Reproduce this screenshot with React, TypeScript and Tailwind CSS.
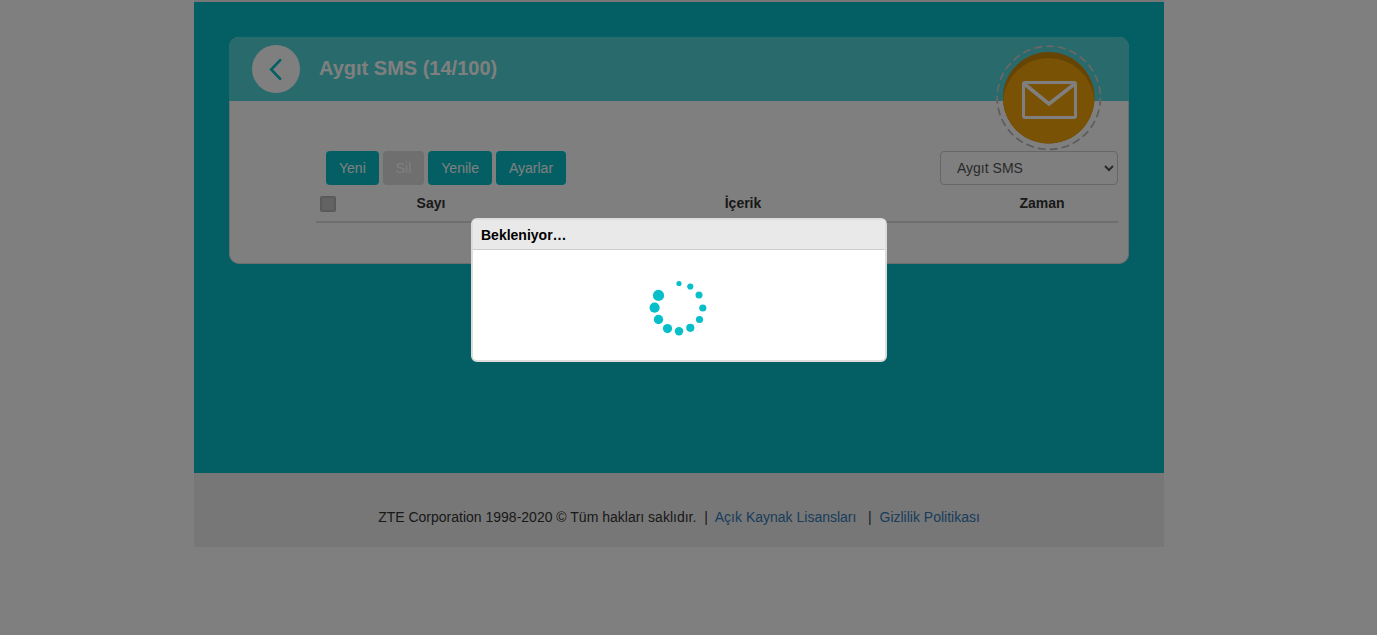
const dots = [
  { x: 39, y: 13.5, r: 2.6 },
  { x: 50.3, y: 16.5, r: 3.1 },
  { x: 59, y: 25, r: 3.5 },
  { x: 62.8, y: 38, r: 3.6 },
  { x: 59.5, y: 49.5, r: 3.6 },
  { x: 50.3, y: 57.8, r: 4.1 },
  { x: 39, y: 61.2, r: 4.2 },
  { x: 27.5, y: 58.6, r: 4.6 },
  { x: 18.5, y: 49.5, r: 4.7 },
  { x: 14.6, y: 37.7, r: 5.1 },
  { x: 18.5, y: 25.4, r: 5.6 },
];

const actions = [
  { label: "Yeni", disabled: false },
  { label: "Sil", disabled: true },
  { label: "Yenile", disabled: false },
  { label: "Ayarlar", disabled: false },
];

function MailBadge() {
  return (
    <svg className="absolute right-[25px] top-[7px] h-[108px] w-[108px]" viewBox="0 0 108 108" aria-hidden="true">
      <defs>
        <linearGradient id="ring" x1="0" y1="0" x2="0" y2="1">
          <stop offset="0.53" stopColor="#dccccc" />
          <stop offset="0.53" stopColor="#b8b4b4" />
        </linearGradient>
      </defs>
      <circle cx="53.8" cy="53.8" r="51.6" fill="none" stroke="url(#ring)" strokeWidth="1.6" strokeDasharray="8 4" />
      <circle cx="53.7" cy="53.8" r="45.8" fill="#cc8a08" />
      <path d="M8 56.8A45.8 45.8 0 0 1 99.4 56.8A45.8 45.8 0 0 1 8 56.8Z" fill="#f4a40a" />
      <rect x="28.5" y="38.5" width="52" height="35" rx="1.5" fill="none" stroke="#fff" strokeWidth="3" />
      <path d="M29.500 40L54 60L79.500 40" fill="none" stroke="#fff" strokeWidth="3.6" />
    </svg>
  );
}

function Spinner() {
  return (
    <svg className="h-[76px] w-[78px]" viewBox="0 0 78 76" aria-hidden="true">
      {dots.map((d) => (
        <circle key={d.x + "-" + d.y} cx={d.x} cy={d.y} r={d.r} fill="#08bec8" />
      ))}
    </svg>
  );
}

export default function App() {
  return (
    <div className="min-h-screen bg-white pr-[19px] font-['Liberation_Sans',Arial,sans-serif] text-sm text-[#333]">
      <div className="mx-auto max-w-[970px] bg-[#eee] pt-[2px]">
        <main className="min-h-[471px] bg-[#08bec8] px-[35px] pt-[35px]">
          <section className="relative rounded-[10px] border border-[#ddd] border-t-0 bg-white">
            <header className="-mx-px flex h-16 items-center gap-[19px] rounded-t-[10px] bg-[#52d6d8] pl-[23px]">
              <button type="button" aria-label="Geri" className="flex size-12 items-center justify-center rounded-full bg-white">
                <svg className="size-12" viewBox="0 0 48 48" fill="none" stroke="#08bec8" strokeWidth="2.6" strokeLinecap="round" aria-hidden="true">
                  <path d="M28.2 15.200L19.200 24.500L28.2 33.800" />
                </svg>
              </button>
              <h1 className="pb-[2px] text-xl font-bold text-white">Aygıt SMS (14/100)</h1>
            </header>
            <MailBadge />
            <div className="pb-10 pl-[86px] pr-[10px] pt-[50px]">
              <div className="flex items-center justify-between pl-[10px]">
                <div className="flex gap-1">
                  {actions.map((a) => (
                    <button
                      key={a.label}
                      type="button"
                      disabled={a.disabled}
                      className="h-[34px] rounded-[4px] bg-[#08bec8] px-[13px] text-sm text-white disabled:bg-[#dedede]"
                    >
                      {a.label}
                    </button>
                  ))}
                </div>
                <select
                  aria-label="SMS konumu"
                  className="h-[34px] w-[178px] rounded-[4px] border border-[#ccc] bg-white px-3 text-sm text-[#555]"
                >
                  <option>Aygıt SMS</option>
                </select>
              </div>
              <table className="w-full table-fixed border-b-2 border-[#ddd]">
                <thead>
                  <tr>
                    <th className="w-[26px] pl-1 pt-px text-left">
                      <input
                        type="checkbox"
                        aria-label="Tümünü seç"
                        className="block size-4 appearance-none rounded-[2px] border-2 border-[#b4b4b4] bg-[#c6c6c6]"
                      />
                    </th>
                    <th className="w-[178px] py-2 font-bold">Sayı</th>
                    <th className="py-2 font-bold">İçerik</th>
                    <th className="w-[152px] py-2 font-bold">Zaman</th>
                  </tr>
                </thead>
              </table>
            </div>
          </section>
        </main>
        <footer className="flex h-[74px] items-center justify-center pt-[14px]">
          <p className="whitespace-pre text-sm">
            {"ZTE Corporation 1998-2020 © Tüm hakları saklıdır.  |  "}
            <a href="#lisanslar" className="text-[#337ab7]">Açık Kaynak Lisansları</a>
            {"   |  "}
            <a href="#gizlilik" className="text-[#337ab7]">Gizlilik Politikası</a>
          </p>
        </footer>
      </div>
      <div className="fixed inset-0 flex items-start justify-center bg-black/50 pr-[19px] pt-[218px]">
        <div role="dialog" aria-modal="true" aria-labelledby="wait-title" className="w-[416px] overflow-hidden rounded-[6px] border-2 border-[#ddd] bg-white">
          <h2 id="wait-title" className="border-b border-[#ccc] bg-[#e9e9e9] px-2 pb-1 pt-[5px] text-sm font-bold text-black">
            Bekleniyor…
          </h2>
          <div className="flex h-[110px] items-center justify-center pt-[6px]">
            <Spinner />
          </div>
        </div>
      </div>
    </div>
  );
}
